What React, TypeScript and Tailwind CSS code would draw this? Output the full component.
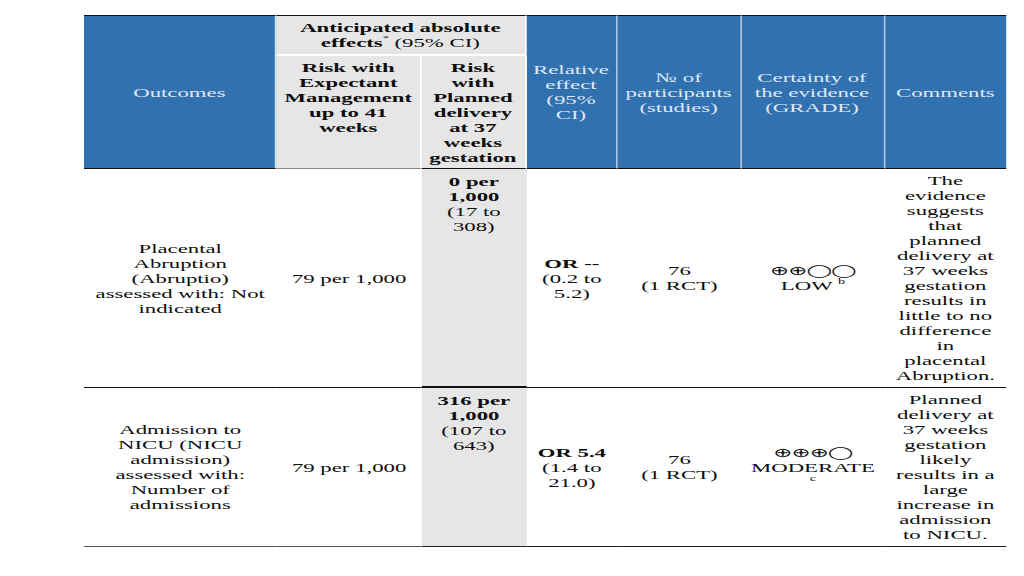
import React from "react";

// the source table is a stretched screenshot: lay it out at natural size, then widen it
const GRAY = "bg-[#e6e6e6]";

const headBlue =
  "bg-[#3171b0] text-[#dfe8f3] font-normal align-middle text-center border-t border-t-[#111] border-b border-b-[#111] px-[2px]";

export default function App() {
  return (
    <div className="min-h-screen bg-white">
      <div className="pt-[15px] pl-[84px]">
        <div className="w-[526.9px] origin-top-left scale-x-175 font-['Liberation_Serif','DejaVu_Sans',serif] text-[13px] leading-[15px] text-[#0d0d0d]">
          <table className="w-full table-fixed border-separate border-spacing-0 text-center">
            <colgroup>
              <col className="w-[110px]" />
              <col className="w-[83px]" />
              <col className="w-[59.5px]" />
              <col className="w-[52.5px]" />
              <col className="w-[70.5px]" />
              <col className="w-[82px]" />
              <col className="w-[69.4px]" />
            </colgroup>
            <thead>
              <tr>
                <th rowSpan={2} className={`${headBlue} border-r border-r-[#d6e2ef]`}>
                  Outcomes
                </th>
                <th
                  colSpan={2}
                  className={`${GRAY} border-t border-t-[#111] border-b-2 border-b-white border-r border-r-white py-[4px] px-[2px] font-bold align-middle`}
                >
                  Anticipated absolute
                  <br />
                  effects<span className="text-[7px] leading-[7px] font-normal align-top">*</span>{" "}
                  <span className="font-normal">(95% CI)</span>
                </th>
                <th rowSpan={2} className={`${headBlue} border-r border-r-[#a9c4e0]`}>
                  Relative effect (95% CI)
                </th>
                <th rowSpan={2} className={`${headBlue} border-r border-r-[#a9c4e0]`}>
                  № of participants (studies)
                </th>
                <th rowSpan={2} className={`${headBlue} border-r border-r-[#a9c4e0]`}>
                  Certainty of the evidence (GRADE)
                </th>
                <th rowSpan={2} className={headBlue}>
                  Comments
                </th>
              </tr>
              <tr>
                <th
                  className={`${GRAY} border-r border-r-white border-b border-b-[#888] pt-[4px] pb-[3px] px-[2px] font-bold align-top`}
                >
                  Risk with Expectant Management up to 41 weeks
                </th>
                <th
                  className={`${GRAY} border-r border-r-white border-b border-b-[#111] pt-[4px] pb-[3px] px-[3.5px] font-bold align-top`}
                >
                  Risk with Planned delivery at 37 weeks gestation
                </th>
              </tr>
            </thead>
            <tbody>
              <tr>
                <td className="border-b border-b-[#111] px-[5px] py-[4px] align-middle">
                  Placental Abruption (Abruptio) assessed with: Not indicated
                </td>
                <td className="border-b border-b-[#111] px-[2px] py-[4px] align-middle">79 per 1,000</td>
                <td className={`${GRAY} border-b-2 border-b-[#111] px-[3.5px] pt-[5px] pb-[4px] align-top`}>
                  <b>0 per 1,000</b>
                  <br />
                  (17 to 308)
                </td>
                <td className="border-b border-b-[#111] px-[2px] py-[4px] align-middle">
                  <b>OR --</b>
                  <br />
                  (0.2 to 5.2)
                </td>
                <td className="border-b border-b-[#111] px-[2px] py-[4px] align-middle">
                  76
                  <br />
                  (1 RCT)
                </td>
                <td className="border-b border-b-[#111] px-[2px] py-[4px] align-middle">
                  <span className="tracking-[-0.5px]">⊕⊕◯◯</span>
                  <br />
                  LOW <span className="text-[8px] leading-[8px] align-top">b</span>
                </td>
                <td className="border-b border-b-[#111] px-[5.5px] py-[4px] align-middle">
                  The evidence suggests that planned delivery at 37 weeks gestation results in little to no difference in
                  placental Abruption.
                </td>
              </tr>
              <tr>
                <td className="border-b border-b-[#555] px-[5px] py-[4px] align-middle">
                  Admission to NICU (NICU admission) assessed with: Number of admissions
                </td>
                <td className="border-b border-b-[#555] px-[2px] py-[4px] align-middle">79 per 1,000</td>
                <td className={`${GRAY} border-b border-b-[#222] px-[3.5px] pt-[5px] pb-[4px] align-top`}>
                  <b>316 per 1,000</b>
                  <br />
                  (107 to 643)
                </td>
                <td className="border-b border-b-[#222] px-[2px] py-[4px] align-middle">
                  <b>OR 5.4</b>
                  <br />
                  (1.4 to 21.0)
                </td>
                <td className="border-b border-b-[#222] px-[2px] py-[4px] align-middle">
                  76
                  <br />
                  (1 RCT)
                </td>
                <td className="border-b border-b-[#222] px-[2px] py-[4px] align-middle">
                  <span className="tracking-[-0.5px]">⊕⊕⊕◯</span>
                  <br />
                  MODERATE
                  <br />
                  <span className="text-[8px] leading-[8px] align-top">c</span>
                </td>
                <td className="border-b border-b-[#222] px-[5.5px] py-[4px] align-middle">
                  Planned delivery at 37 weeks gestation likely results in a large increase in admission to NICU.
                </td>
              </tr>
            </tbody>
          </table>
        </div>
      </div>
    </div>
  );
}
